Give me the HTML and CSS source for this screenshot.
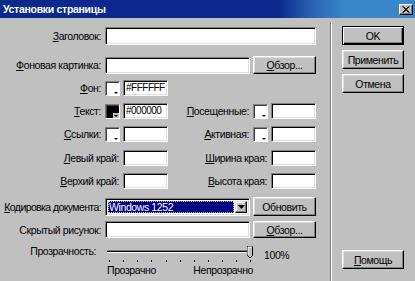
FILE: index.html
```html
<!DOCTYPE html>
<html lang="ru">
<head>
<meta charset="utf-8">
<title>Установки страницы</title>
<link rel="stylesheet" href="styles.css">
</head>
<body>
<div class="win">
  <div class="titlebar">
    <span class="title">Установки страницы</span>
    <span class="close"><svg width="8" height="7" viewBox="0 0 8 7"><path d="M0.5 0.5L7.5 6.5M7.5 0.5L0.5 6.5M1.5 0.5L6.5 6.5M6.5 0.5L1.5 6.5" stroke="#000" stroke-width="1" fill="none"/></svg></span>
  </div>
  <div class="main">
    <div class="form">
      <div class="row r1">
        <span class="lbl"><u>З</u>аголовок:</span>
        <div class="field wide"></div>
      </div>
      <div class="row r2">
        <span class="lbl"><u>Ф</u>оновая картинка:</span>
        <div class="field mid"></div>
        <span class="btn side-btn"><u>О</u>бзор...</span>
      </div>
      <div class="row r3">
        <div class="grp left">
          <span><u>Ф</u>он:</span>
          <span class="swatch white"></span>
          <div class="field small hex">#FFFFFF</div>
        </div>
      </div>
      <div class="row r4">
        <div class="grp left">
          <span><u>Т</u>екст:</span>
          <span class="swatch black"></span>
          <div class="field small hex">#000000</div>
        </div>
        <div class="grp right">
          <span><u>П</u>осещенные:</span>
          <span class="swatch white"></span>
          <div class="field small"></div>
        </div>
      </div>
      <div class="row r5">
        <div class="grp left">
          <span><u>С</u>сылки:</span>
          <span class="swatch white"></span>
          <div class="field small"></div>
        </div>
        <div class="grp right">
          <span><u>А</u>ктивная:</span>
          <span class="swatch white"></span>
          <div class="field small"></div>
        </div>
      </div>
      <div class="row r6">
        <div class="grp left">
          <span><u>Л</u>евый край:</span>
          <div class="field small"></div>
        </div>
        <div class="grp right">
          <span><u>Ш</u>ирина края:</span>
          <div class="field small"></div>
        </div>
      </div>
      <div class="row r7">
        <div class="grp left">
          <span><u>В</u>ерхий край:</span>
          <div class="field small"></div>
        </div>
        <div class="grp right">
          <span><u>В</u>ысота края:</span>
          <div class="field small"></div>
        </div>
      </div>
      <div class="row r8">
        <span class="lbl"><u>К</u>одировка документа:</span>
        <div class="field select">
          <span class="sel-val">Windows 1252</span>
          <span class="drop"><svg width="7" height="4" viewBox="0 0 7 4"><path d="M0 0H7L3.5 4Z" fill="#000"/></svg></span>
        </div>
        <span class="btn side-btn">Обновить</span>
      </div>
      <div class="row r9">
        <span class="lbl">Скрытый рисунок:</span>
        <div class="field mid"></div>
        <span class="btn side-btn"><u>О</u>бзор...</span>
      </div>
      <div class="row r10">
        <span class="lbl">Прозрачность:</span>
        <svg class="slider" width="150" height="22" viewBox="0 0 150 22">
          <rect x="3" y="8" width="144" height="1" fill="#808080"/>
          <rect x="3" y="9" width="144" height="1" fill="#000"/>
          <rect x="3" y="10" width="144" height="1" fill="#fff"/>
          <g fill="#000">
            <rect x="5" y="18" width="1" height="2"/>
            <rect x="19" y="18" width="1" height="2"/>
            <rect x="33" y="18" width="1" height="2"/>
            <rect x="47" y="18" width="1" height="2"/>
            <rect x="62" y="18" width="1" height="2"/>
            <rect x="76" y="18" width="1" height="2"/>
            <rect x="90" y="18" width="1" height="2"/>
            <rect x="104" y="18" width="1" height="2"/>
            <rect x="118" y="18" width="1" height="2"/>
            <rect x="132" y="18" width="1" height="2"/>
            <rect x="146" y="18" width="1" height="2"/>
          </g>
          <path d="M143.5 4.5H148.5V13.5L146 16L143.5 13.5Z" fill="#c0c0c0" stroke="#000" stroke-width="1"/>
          <path d="M144 13V5H148" stroke="#fff" stroke-width="1" fill="none"/>
        </svg>
        <span class="pct">100%</span>
      </div>
      <div class="row r11">
        <div class="scale"><span>Прозрачно</span><span>Непрозрачно</span></div>
      </div>
    </div>
    <div class="sep"></div>
    <div class="side">
      <span class="btn cmd def">OK</span>
      <span class="btn cmd">Применить</span>
      <span class="btn cmd">Отмена</span>
      <span class="btn cmd help"><u>П</u>омощь</span>
    </div>
  </div>
</div>
</body>
</html>
```

FILE: styles.css
```css
* {
  box-sizing: border-box;
  margin: 0;
  padding: 0;
}

html, body {
  margin: 0;
  width: 415px;
  height: 281px;
  overflow: hidden;
  background: #c0c0c0;
}

body {
  font-family: "Liberation Sans", Arial, sans-serif;
  font-size: 10.5px;
  letter-spacing: -0.4px;
  color: #000;
}

u {
  text-decoration: underline;
  text-underline-offset: 1px;
}

.win {
  width: 415px;
  height: 281px;
  background: #c0c0c0;
  display: flex;
  flex-direction: column;
}

.titlebar {
  height: 18px;
  flex: none;
  display: flex;
  align-items: center;
  justify-content: space-between;
  padding: 0 2px 0 3px;
  background: linear-gradient(90deg, #0b288c 0%, #0b288c 67%, #2a62b2 75%, #3a86c8 83%, #3a86c8 100%);
}

.title {
  color: #fff;
  font-weight: bold;
  font-size: 10.5px;
  letter-spacing: -0.3px;
  white-space: nowrap;
}

.close {
  width: 14px;
  height: 11px;
  background: #c0c0c0;
  border: 1px solid;
  border-color: #fff #000 #000 #fff;
  box-shadow: inset -1px -1px #808080;
  display: flex;
  align-items: center;
  justify-content: center;
}

.close svg {
  display: block;
}

.main {
  flex: 1;
  display: flex;
}

.form {
  width: 330px;
  flex: none;
  padding: 9px 14px 0 0;
  display: flex;
  flex-direction: column;
}

.sep {
  width: 2px;
  flex: none;
  border-left: 1px solid #808080;
  border-right: 1px solid #fff;
  margin-top: 4px;
}

.side {
  width: 83px;
  flex: none;
  padding: 8px 0 12px 10px;
  display: flex;
  flex-direction: column;
  gap: 5px;
}

.row {
  display: flex;
  align-items: center;
  white-space: nowrap;
}

.lbl {
  width: 101px;
  flex: none;
  text-align: right;
  margin-right: 4px;
}

.r1 { height: 18px; }
.r2 { height: 18px; margin-top: 11px; }
.r3 { height: 16px; margin-top: 6px; }
.r4 { height: 16px; margin-top: 7px; }
.r5 { height: 16px; margin-top: 7px; }
.r6 { height: 16px; margin-top: 8px; }
.r7 { height: 16px; margin-top: 7px; }
.r8 { height: 19px; margin-top: 8px; }
.r9 { height: 17px; margin-top: 5px; }
.r10 { height: 22px; margin-top: 4px; align-items: flex-start; }
.r11 { height: 12px; }

.r8 .lbl {
  letter-spacing: -0.6px;
}

.r10 .lbl {
  width: 96px;
  margin-right: 8px;
  margin-top: 3px;
}

.field {
  background: #fff;
  border: 1px solid;
  border-color: #808080 #fff #fff #808080;
  box-shadow: inset 1px 1px #000, inset -1px -1px #dfdfdf;
}

.wide {
  width: 211px;
  height: 18px;
}

.mid {
  width: 145px;
  height: 17px;
}

.small {
  width: 45px;
  height: 16px;
  padding-left: 3px;
  line-height: 14px;
  overflow: hidden;
}

.hex {
  font-size: 10px;
  letter-spacing: -0.5px;
  padding-left: 2px;
}

.grp {
  display: flex;
  align-items: center;
  justify-content: flex-end;
  gap: 3px;
}

.grp.left {
  width: 168px;
}

.grp.right {
  flex: 1;
}

.grp > span:first-child {
  margin-right: 1px;
}

.swatch {
  position: relative;
  width: 15px;
  height: 15px;
  border: 1px solid;
  border-color: #808080 #fff #fff #808080;
  box-shadow: inset 1px 1px #404040;
}

.swatch.white { background: #fff; }
.swatch.black { background: #000; }

.swatch.black::after {
  content: "";
  position: absolute;
  right: 0;
  bottom: 0;
  width: 6px;
  height: 5px;
  background: #c0c0c0;
}

.swatch::before {
  content: "";
  position: absolute;
  right: 1px;
  bottom: 1px;
  width: 0;
  height: 0;
  border-left: 2px solid transparent;
  border-right: 2px solid transparent;
  border-top: 2px solid #000;
  z-index: 1;
}

.btn {
  display: flex;
  align-items: center;
  justify-content: center;
  background: #c0c0c0;
  border: 1px solid;
  border-color: #fff #000 #000 #fff;
  box-shadow: inset -1px -1px #808080, inset 1px 1px #dfdfdf;
  white-space: nowrap;
}

.side-btn {
  width: 63px;
  height: 18px;
  margin-left: 3px;
}

.r8 .side-btn { height: 19px; }
.r9 .side-btn { height: 17px; }

.cmd {
  width: 62px;
  height: 19px;
  flex: none;
}

.cmd.def {
  border-color: #000;
  box-shadow: inset 1px 1px #fff, inset -1px -1px #000, inset -2px -2px #808080;
}

.cmd.help {
  margin-top: auto;
}

.select {
  width: 145px;
  height: 18px;
  display: flex;
  padding: 2px;
  gap: 1px;
}

.sel-val {
  flex: 1;
  background: #000080;
  color: #fff;
  line-height: 12px;
  padding-left: 1px;
  outline: 1px dotted #c0c0c0;
  outline-offset: -1px;
}

.drop {
  width: 12px;
  flex: none;
  display: flex;
  align-items: center;
  justify-content: center;
  background: #c0c0c0;
  border: 1px solid;
  border-color: #dfdfdf #000 #000 #dfdfdf;
  box-shadow: inset -1px -1px #808080, inset 1px 1px #fff;
}

.drop svg {
  display: block;
}

.slider {
  display: block;
  flex: none;
}

.pct {
  margin-left: 10px;
  margin-top: 7px;
}

.scale {
  margin-left: 107px;
  width: 146px;
  display: flex;
  justify-content: space-between;
}
```
